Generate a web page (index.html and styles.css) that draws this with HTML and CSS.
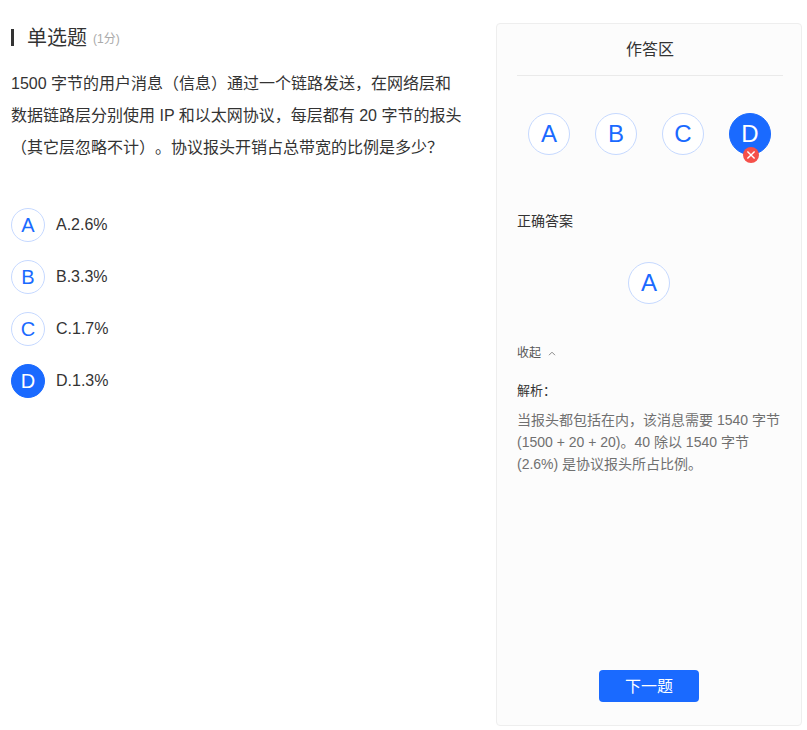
FILE: index.html
```html
<!DOCTYPE html>
<html lang="zh-CN">
<head>
<meta charset="utf-8">
<title>单选题</title>
<link rel="stylesheet" href="styles.css">
</head>
<body>
<div class="page">
  <main class="question">
    <h1 class="q-title"><span class="q-name">单选题</span><span class="q-score">(1分)</span></h1>
    <p class="q-text">1500 字节的用户消息（信息）通过一个链路发送，在网络层和数据链路层分别使用 IP 和以太网协议，每层都有 20 字节的报头（其它层忽略不计）。协议报头开销占总带宽的比例是多少？</p>
    <ul class="options">
      <li class="option"><span class="circle small">A</span><span>A.2.6%</span></li>
      <li class="option"><span class="circle small">B</span><span>B.3.3%</span></li>
      <li class="option"><span class="circle small">C</span><span>C.1.7%</span></li>
      <li class="option"><span class="circle small active">D</span><span>D.1.3%</span></li>
    </ul>
  </main>
  <aside class="panel">
    <h2 class="panel-title">作答区</h2>
    <div class="answers">
      <span class="circle big">A</span>
      <span class="circle big">B</span>
      <span class="circle big">C</span>
      <span class="circle big active">D
        <svg class="wrong" width="16" height="16" viewBox="0 0 16 16" aria-hidden="true"><circle cx="8" cy="8" r="8" fill="#f5504a"/><path d="M4.4 4.4l7.2 7.2M11.6 4.4l-7.2 7.2" stroke="#fff" stroke-width="1.4" fill="none"/></svg>
      </span>
    </div>
    <h3 class="right-title">正确答案</h3>
    <div class="right-answer"><span class="circle big">A</span></div>
    <div class="collapse">收起<svg class="chevron" width="8" height="5" viewBox="0 0 8 5" aria-hidden="true"><path d="M1 4.2l3-3 3 3" stroke="#888" stroke-width="1" fill="none"/></svg></div>
    <div class="analysis-title">解析：</div>
    <p class="analysis">当报头都包括在内，该消息需要 1540 字节 (1500 + 20 + 20)。40 除以 1540 字节 (2.6%) 是协议报头所占比例。</p>
    <button class="next" type="button">下一题</button>
  </aside>
</div>
</body>
</html>
```
FILE: styles.css
```css
* { box-sizing: border-box; }
html, body { margin: 0; padding: 0; background: #fff; }
body {
  font-family: "Liberation Sans", "Noto Sans CJK SC", sans-serif;
  color: #333;
  text-spacing-trim: space-all;
}
.page {
  display: flex;
  height: 730px;
  padding: 23px 5px 4px 11px;
  justify-content: space-between;
}
.question { width: 452px; }
.q-title {
  margin: 6px 0 0;
  height: 17px;
  display: flex;
  align-items: center;
  border-left: 3px solid #333;
  padding-left: 13px;
  font-weight: 400;
}
.q-name { font-size: 20px; line-height: 28px; }
.q-score { font-size: 12px; color: #aaa; margin-left: 6px; margin-top: -1px; }
.q-text {
  margin: 22px 0 0;
  font-size: 16px;
  line-height: 32px;
}
.options { list-style: none; margin: 44px 0 0; padding: 0; display: flex; flex-direction: column; gap: 18px; }
.option { display: flex; align-items: center; gap: 11px; font-size: 16px; height: 34px; }
.circle {
  position: relative;
  display: inline-flex;
  align-items: center;
  justify-content: center;
  border: 1px solid #c6d9ff;
  border-radius: 50%;
  color: #1a6aff;
  background: #fff;
  flex: none;
}
.circle.small { width: 34px; height: 34px; font-size: 20px; }
.circle.big { width: 42px; height: 42px; font-size: 24px; }
.circle.active { background: #1a6aff; border-color: #1a6aff; color: #fff; }
.wrong { position: absolute; left: 13px; top: 33px; }
.panel {
  width: 306px;
  height: 703px;
  display: flex;
  flex-direction: column;
  background: #fcfcfc;
  border: 1px solid #eee;
  border-radius: 4px;
  padding: 0 18px 23px 20px;
}
.panel-title {
  margin: 0;
  height: 52px;
  line-height: 50px;
  padding-top: 1px;
  text-align: center;
  font-size: 16px;
  font-weight: 400;
  border-bottom: 1px solid #eaeaea;
}
.answers { display: flex; gap: 25px; padding-left: 11px; margin-top: 37px; }
.right-title { margin: 56px 0 0; font-size: 14px; font-weight: 400; line-height: 20px; }
.right-answer { display: flex; justify-content: center; padding-right: 2px; margin-top: 31px; }
.collapse { margin-top: 40px; font-size: 12px; line-height: 18px; color: #555; display: flex; align-items: center; gap: 7px; }
.analysis-title { margin-top: 19px; font-size: 13px; line-height: 20px; }
.analysis { margin: 8px 0 0; font-size: 14px; line-height: 22px; color: #707070; }
.next {
  margin: auto 84px 0 82px;
  width: 100px;
  height: 32px;
  border: 0;
  border-radius: 4px;
  padding: 0 0 2px;
  background: #1a6aff;
  color: #fff;
  font: inherit;
  font-size: 16px;
}
```
